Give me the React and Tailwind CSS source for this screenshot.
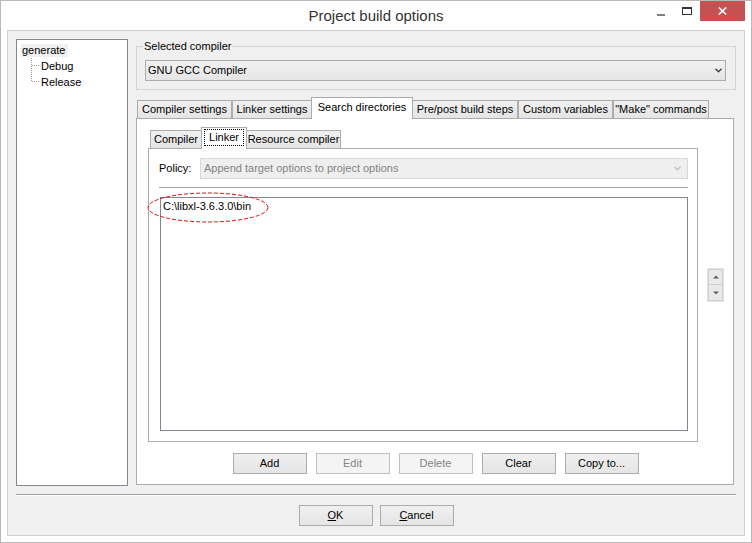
import React from 'react';

const tabBase =
  'flex items-center justify-center border border-b-0 border-[#acacac] whitespace-nowrap';
const tabOff = `${tabBase} h-[18px] bg-linear-to-b from-[#f0f0f0] to-[#e5e5e5]`;
const tabOn = `${tabBase} relative z-10 -mx-px -mb-px h-[22px] bg-white pb-[2px]`;

function Button({ children, disabled }) {
  return (
    <div
      className={`flex h-[21px] w-[74px] items-center justify-center border ${
        disabled
          ? 'border-[#bfbfbf] bg-[#f4f4f4] text-[#838383]'
          : 'border-[#acacac] bg-linear-to-b from-[#f0f0f0] to-[#e5e5e5] text-black'
      }`}
    >
      {children}
    </div>
  );
}

function Chevron({ color }) {
  return (
    <svg width="7" height="5" viewBox="0 0 7 5" className="shrink-0">
      <path d="M0.5 0.8 L3.5 3.8 L6.5 0.8" fill="none" stroke={color} strokeWidth="1.4" />
    </svg>
  );
}

function TreeLine({ last }) {
  return (
    <svg width="10" height="16" viewBox="0 0 10 16" className="shrink-0">
      <line x1="0.5" y1="0" x2="0.5" y2={last ? 8 : 16} stroke="#a0a0a0" strokeDasharray="1 1" />
      <line x1="1" y1="7.5" x2="9" y2="7.5" stroke="#a0a0a0" strokeDasharray="1 1" />
    </svg>
  );
}

export default function App() {
  return (
    <div className="flex h-[543px] w-[752px] flex-col border border-[#b9b9b9] bg-white font-['Liberation_Sans',Arial,sans-serif] text-[11px] leading-[13px] text-black">
      {/* Title bar */}
      <div className="relative flex h-[29px] shrink-0 items-center justify-center">
        <span className="text-[15px] leading-[18px] text-[#333]">Project build options</span>
        <div className="absolute right-[6px] top-0 flex h-[20px]">
          <div className="flex w-[26px] items-center justify-center">
            <div className="mt-[7px] h-[2px] w-[8px] bg-[#808080]" />
          </div>
          <div className="flex w-[26px] items-center justify-center">
            <div className="mb-[1px] h-[8px] w-[10px] border border-t-2 border-[#333]" />
          </div>
          <div className="flex w-[45px] items-center justify-center bg-[#c75050]">
            <svg width="9" height="8" viewBox="0 0 9 8">
              <path d="M0.8 0.5 L8.2 7.5 M8.2 0.5 L0.8 7.5" stroke="#fff" strokeWidth="1.6" />
            </svg>
          </div>
        </div>
      </div>

      {/* Client */}
      <div className="flex flex-1 flex-col px-[6px] pb-[6px]">
        <div className="flex flex-1 flex-col border border-[#cfcfcf] bg-[#f0f0f0] px-[8px] pt-[8px]">
          <div className="flex h-[447px] gap-[8px]">
            {/* Tree */}
            <div className="w-[112px] border border-[#828790] bg-white pt-[2px]">
              <div className="flex h-[16px] items-center pl-[4px]">
                <span className="flex h-[13px] items-center bg-[#f0f0f0] px-[1px] pr-[3px]">generate</span>
              </div>
              <div className="flex h-[16px] items-center pl-[14px]">
                <TreeLine />
                <span>Debug</span>
              </div>
              <div className="flex h-[16px] items-center pl-[14px]">
                <TreeLine last />
                <span>Release</span>
              </div>
            </div>

            {/* Right side */}
            <div className="flex w-[600px] flex-col">
              <fieldset className="border border-[#d5d5d5] pb-[8px] pl-[8px] pr-[9px]">
                <legend className="-ml-[2px] px-[1px] leading-[14px]">Selected compiler</legend>
                <div className="mt-[7px] flex h-[21px] items-center justify-between border border-[#acacac] bg-linear-to-b from-[#f2f2f2] to-[#e5e5e5] pl-[2px] pr-[3px]">
                  <span>GNU GCC Compiler</span>
                  <Chevron color="#404040" />
                </div>
              </fieldset>

              <div className="mt-[7px] flex h-[21px] items-end pl-px">
                <div className={`${tabOff} w-[95px]`}>Compiler settings</div>
                <div className={`${tabOff} w-[80px]`}>Linker settings</div>
                <div className={`${tabOn} w-[102px]`}>Search directories</div>
                <div className={`${tabOff} w-[106px]`}>Pre/post build steps</div>
                <div className={`${tabOff} w-[95px]`}>Custom variables</div>
                <div className={`${tabOff} w-[96px]`}>"Make" commands</div>
              </div>

              <div className="h-[367px] w-[598px] border border-[#acacac] bg-white">
                <div className="flex pl-[11px] pt-[8px]">
                  <div className="flex w-[550px] flex-col">
                    <div className="flex h-[21px] items-end pl-[2px]">
                      <div className={`${tabOff} w-[52px]`}>Compiler</div>
                      <div className={`${tabOn} w-[46px]`}>
                        <span className="border border-dotted border-black px-[4px] leading-[15px]">Linker</span>
                      </div>
                      <div className={`${tabOff} w-[95px]`}>Resource compiler</div>
                    </div>
                    <div className="h-[294px] border border-[#acacac] bg-white pl-[10px] pr-[9px] pt-[9px]">
                      <div className="flex h-[21px] items-center">
                        <span className="w-[41px]">Policy:</span>
                        <div className="flex h-[21px] flex-1 items-center justify-between border border-[#d9d9d9] bg-[#efefef] pl-[3px] pr-[6px] text-[#838383]">
                          <span>Append target options to project options</span>
                          <Chevron color="#c0c0c0" />
                        </div>
                      </div>
                      <div className="mt-[8px] h-px bg-[#a0a0a0]" />
                      <div className="relative ml-px mt-[9px] h-[234px] border border-[#828790] bg-white pl-[2px] pt-px">
                        <div className="leading-[14px]">C:\libxl-3.6.3.0\bin</div>
                        <svg
                          width="122"
                          height="31"
                          viewBox="0 0 122 31"
                          className="pointer-events-none absolute -left-[14px] -top-[6px] overflow-visible"
                        >
                          <ellipse cx="61" cy="15.5" rx="60" ry="14.5" fill="none" stroke="#e01010" strokeWidth="1" strokeDasharray="4 2" />
                        </svg>
                      </div>
                    </div>
                  </div>

                  {/* Spin buttons */}
                  <div className="ml-[9px] mt-[141px] flex h-[34px] w-[17px] flex-col border border-[#e3e3e3]">
                    <div className="flex h-[16px] items-center justify-center border border-[#cfcfcf] bg-[#e9e9e9]">
                      <svg width="6" height="4" viewBox="0 0 6 4">
                        <path d="M0 3.5 L3 0.5 L6 3.5 Z" fill="#606060" />
                      </svg>
                    </div>
                    <div className="flex h-[16px] items-center justify-center border border-t-0 border-[#cfcfcf] bg-[#e9e9e9]">
                      <svg width="6" height="4" viewBox="0 0 6 4">
                        <path d="M0 0.5 L3 3.5 L6 0.5 Z" fill="#606060" />
                      </svg>
                    </div>
                  </div>
                </div>

                <div className="mt-[11px] flex justify-center gap-[9px] pl-px">
                  <Button>Add</Button>
                  <Button disabled>Edit</Button>
                  <Button disabled>Delete</Button>
                  <Button>Clear</Button>
                  <Button>Copy to...</Button>
                </div>
              </div>
            </div>
          </div>

          <div className="mt-[8px] h-px bg-[#a0a0a0]" />
          <div className="h-px bg-white" />

          <div className="mt-[9px] flex justify-center gap-[7px]">
            <Button>
              <span>
                <span className="underline">O</span>K
              </span>
            </Button>
            <Button>
              <span>
                <span className="underline">C</span>ancel
              </span>
            </Button>
          </div>
        </div>
      </div>
    </div>
  );
}
